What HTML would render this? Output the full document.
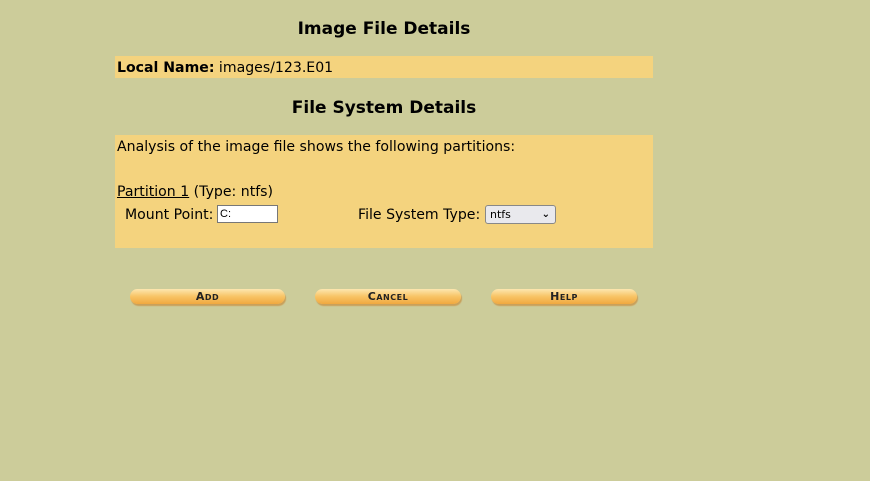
<!DOCTYPE html>
<html><head><style>
body{margin:0;background:#cccc9a;font-family:"DejaVu Sans","Liberation Sans",sans-serif;font-size:14.1px;color:#000;width:870px;height:481px;overflow:hidden;position:relative}
.t{position:absolute;font-weight:bold;font-size:17px;width:538px;left:115px;text-align:center}
.p{position:absolute;left:115px;width:538px;background:#f4d37e}
.a{position:absolute}
.btn{position:absolute;top:289px;height:15px;border-radius:8px;background:linear-gradient(#fde7b0,#f8c465 50%,#f0a840);box-shadow:1px 2px 1px #c9a05a;font:bold 11px "DejaVu Sans",sans-serif;text-align:center;line-height:15px;letter-spacing:.5px;font-variant:small-caps;color:#222}
input{position:absolute;left:217px;top:205px;width:55px;height:16px;border:1px solid #777;font-size:11px;padding:0 2px;box-sizing:content-box;background:#fff}
.sel{position:absolute;left:485px;top:205px;width:71px;height:19px;border:1px solid #888;border-radius:3px;background:#e9e9ed;font-size:11px;line-height:18px;box-sizing:border-box;padding-left:4px}
</style></head><body>
<div class="t" style="top:19px">Image File Details</div>
<div class="p" style="top:56px;height:22px"></div>
<div class="a" style="left:117px;top:60px"><b>Local Name:</b> images/123.E01</div>
<div class="t" style="top:98px">File System Details</div>
<div class="p" style="top:135px;height:113px"></div>
<div class="a" style="left:117px;top:139px">Analysis of the image file shows the following partitions:</div>
<div class="a" style="left:117px;top:184px"><u>Partition 1</u> (Type: ntfs)</div>
<div class="a" style="left:125px;top:207px">Mount Point:</div>
<input value="C:">
<div class="a" style="left:358px;top:207px">File System Type:</div>
<div class="sel">ntfs<span style="position:absolute;right:5px;top:0;font-size:10px;font-weight:bold">&#8964;</span></div>
<div class="btn" style="left:130px;width:155px">Add</div>
<div class="btn" style="left:315px;width:146px">Cancel</div>
<div class="btn" style="left:491px;width:146px">Help</div>
</body></html>
